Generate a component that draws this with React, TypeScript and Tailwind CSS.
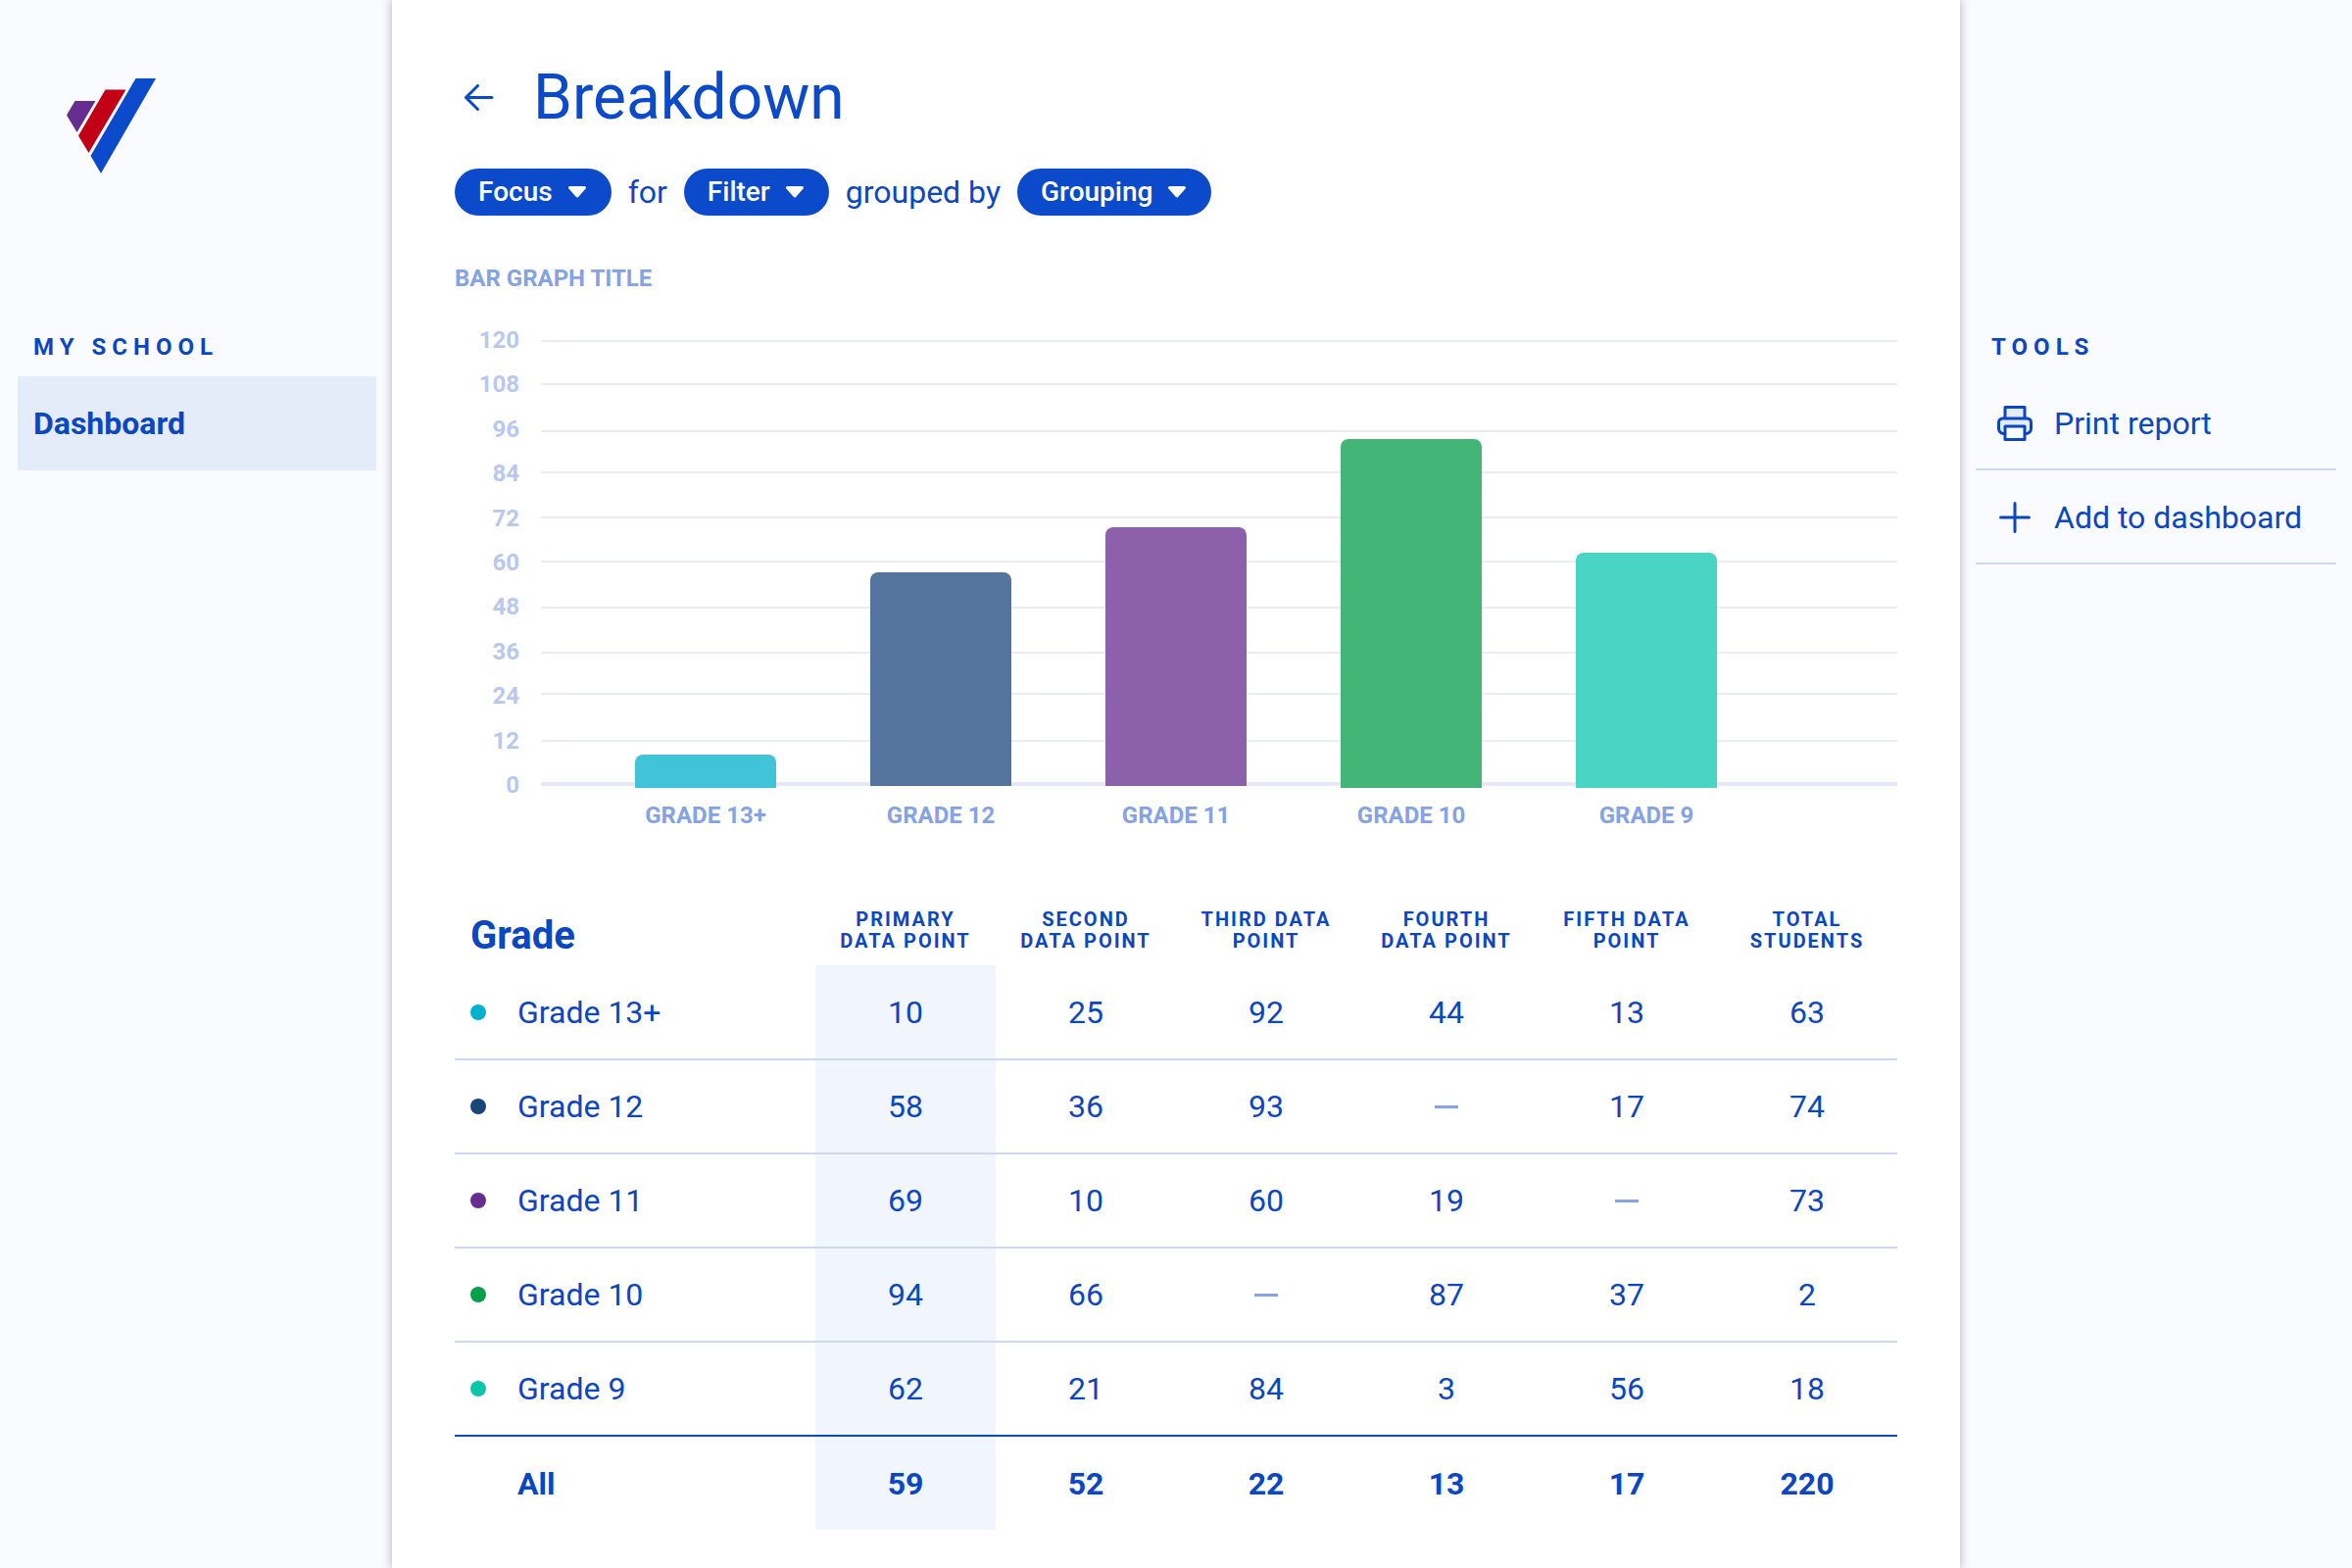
import React from "react";

const BARS = [
  { label: "GRADE 13+", height: 34, overhang: true, color: "#41c3d8" },
  { label: "GRADE 12", height: 218, overhang: false, color: "#53749d" },
  { label: "GRADE 11", height: 264, overhang: false, color: "#8d60ab" },
  { label: "GRADE 10", height: 356, overhang: true, color: "#42b577" },
  { label: "GRADE 9", height: 240, overhang: true, color: "#4ad4c4" },
];

const TICKS = [120, 108, 96, 84, 72, 60, 48, 36, 24, 12, 0];
const GRID_LINES = [1, 45, 93, 135, 181, 226, 273, 319, 361, 409];

const COLUMNS = [
  ["PRIMARY", "DATA POINT"],
  ["SECOND", "DATA POINT"],
  ["THIRD DATA", "POINT"],
  ["FOURTH", "DATA POINT"],
  ["FIFTH DATA", "POINT"],
  ["TOTAL", "STUDENTS"],
];

const ROWS = [
  { name: "Grade 13+", dot: "bg-[#00b1cd]", values: [10, 25, 92, 44, 13, 63] },
  { name: "Grade 12", dot: "bg-[#174778]", values: [58, 36, 93, null, 17, 74] },
  { name: "Grade 11", dot: "bg-[#672d91]", values: [69, 10, 60, 19, null, 73] },
  { name: "Grade 10", dot: "bg-[#069e4b]", values: [94, 66, null, 87, 37, 2] },
  { name: "Grade 9", dot: "bg-[#0dc5ad]", values: [62, 21, 84, 3, 56, 18] },
];

const TOTALS = [59, 52, 22, 13, 17, 220];

function Logo() {
  return (
    <svg width="92" height="98" viewBox="0 0 92 98" aria-label="School logo" role="img">
      <path d="M8.5 23H29.5L10.5 55L0 37.5Z" fill="#662d91" />
      <path d="M39.5 11.5H60.5L22.5 76L12 58.5Z" fill="#c10016" />
      <path d="M70.5 0H91L35 97L24.5 79Z" fill="#0b4acb" />
    </svg>
  );
}

function PrinterIcon() {
  return (
    <svg width="36" height="36" viewBox="0 0 36 36" fill="none" stroke="#0b47c1" strokeWidth="3" strokeLinejoin="round" aria-hidden="true">
      <path d="M8 13V1.5H28V13" fill="#e4ebf9" />
      <path d="M8 28.5H6.5A5 5 0 0 1 1.5 23.5V17A4 4 0 0 1 5.5 13H30.5A4 4 0 0 1 34.5 17V23.5A5 5 0 0 1 29.500 28.500H28" fill="#e4ebf9" />
      <path d="M8 21H28V34.500H8Z" fill="#f9fbff" />
    </svg>
  );
}

function PlusIcon() {
  return (
    <svg width="36" height="36" viewBox="0 0 36 36" stroke="#0b47c1" strokeWidth="3" strokeLinecap="round" aria-hidden="true">
      <path d="M18 3.500V32.500M3.500 18H32.500" />
    </svg>
  );
}

function BackIcon() {
  return (
    <svg width="32" height="28" viewBox="0 0 32 28" fill="none" stroke="#0b4acb" strokeWidth="3" strokeLinecap="round" strokeLinejoin="round" aria-hidden="true">
      <path d="M30 13.500H3.500M15.500 1.500L3.500 13.500L15.500 25.500" />
    </svg>
  );
}

function Pill({ children }: { children: string }) {
  return (
    <button type="button" className="flex h-12 items-center gap-4 rounded-full bg-[#0b4acb] pr-[26px] pl-6 text-[28px] leading-8 font-medium text-white">
      {children}
      <svg width="18" height="12" viewBox="0 0 18 12" fill="#fff" stroke="#fff" strokeWidth="3" strokeLinejoin="round" aria-hidden="true">
        <path d="M1.500 1.500H16.500L9 10Z" />
      </svg>
    </button>
  );
}

function Chart() {
  return (
    <figure className="flex pt-6">
      <div className="flex h-[500px] w-[66px] shrink-0 flex-col items-end justify-between pt-px text-2xl leading-[45px] font-bold text-[#b9c8ee]">
        {TICKS.map((t) => (
          <span key={t}>{t}</span>
        ))}
      </div>
      <div className="relative ml-[22px] flex-1 pt-[23px]">
        <svg className="absolute left-0 w-full" height="456" aria-hidden="true">
          {GRID_LINES.map((y) => (
            <line key={y} x1="0" x2="100%" y1={y} y2={y} stroke="#e9ebf8" strokeWidth="2" />
          ))}
          <line x1="0" x2="100%" y1="453" y2="453" stroke="#e6e8f7" strokeWidth="4" />
        </svg>
        <div className="relative grid grid-cols-5 pr-[136px] pl-12">
          {BARS.map((b) => (
            <div key={b.label} className="flex flex-col items-center">
              <div className="flex h-[457px] w-3/5 flex-col justify-end">
                <div className="w-full rounded-t-lg" style={{ height: b.height, backgroundColor: b.color, marginBottom: b.overhang ? 0 : 2 }} />
              </div>
              <span className="mt-3 text-2xl leading-8 font-bold text-[#85a3e4]">{b.label}</span>
            </div>
          ))}
        </div>
      </div>
    </figure>
  );
}

function DataTable() {
  return (
    <table className="mt-14 w-full table-fixed border-collapse text-[32px] leading-10">
      <thead>
        <tr className="h-[81px]">
          <th scope="col" className="w-1/4 pt-5 pl-4 text-left text-[40px] leading-[44px] font-bold">Grade</th>
          {COLUMNS.map(([a, b]) => (
            <th key={a} scope="col" className="pt-2 text-center text-xl leading-[22px] font-bold tracking-[2px]">
              {a}
              <br />
              {b}
            </th>
          ))}
        </tr>
      </thead>
      <tbody>
        {ROWS.map((r, i) => (
          <tr key={r.name} className={i === ROWS.length - 1 ? "h-24 border-b-2 border-[#0b47c1]" : "h-24 border-b-2 border-[#cbdaf1]"}>
            <th scope="row" className="pl-4 text-left font-normal">
              <span className="flex items-center gap-8">
                <span className={`size-4 rounded-full ${r.dot}`} />
                {r.name}
              </span>
            </th>
            {r.values.map((v, c) => (
              <td key={c} className={c === 0 ? "bg-[#f1f5fe] text-center" : "text-center"}>
                {v === null ? <span className="mx-auto block h-[3px] w-6 bg-[#88a3e0]" aria-label="No data" /> : v}
              </td>
            ))}
          </tr>
        ))}
      </tbody>
      <tfoot>
        <tr className="h-24 font-bold">
          <th scope="row" className="pl-16 text-left">All</th>
          {TOTALS.map((v, c) => (
            <td key={c} className={c === 0 ? "bg-[#f1f5fe] text-center" : "text-center"}>{v}</td>
          ))}
        </tr>
      </tfoot>
    </table>
  );
}

export default function App() {
  return (
    <div className="grid min-h-screen grid-cols-[1fr_4fr_1fr] bg-[#f9fbff] font-['Roboto',sans-serif] text-[#0b47c1]">
      <aside className="pr-4 pl-[18px]">
        <div className="h-[336px] pt-20 pl-[50px]">
          <Logo />
        </div>
        <h2 className="pl-4 text-2xl leading-9 font-bold tracking-[6px]">MY SCHOOL</h2>
        <nav className="mt-3">
          <a href="#dashboard" className="flex h-24 items-center bg-[#e5ecf9] pl-4 text-[32px] leading-10 font-bold">Dashboard</a>
        </nav>
      </aside>

      <main className="bg-white px-16 pt-[58px] shadow-[0_0_10px_rgba(0,0,0,0.3)]">
        <header className="flex items-center gap-10 pl-2">
          <button type="button" aria-label="Back">
            <BackIcon />
          </button>
          <h1 className="text-[64px] leading-[84px] text-[#0b4acb]">Breakdown</h1>
        </header>
        <div className="mt-[30px] flex items-center gap-[17px] text-[32px] leading-10">
          <Pill>Focus</Pill>
          <span>for</span>
          <Pill>Filter</Pill>
          <span>grouped by</span>
          <Pill>Grouping</Pill>
        </div>
        <h2 className="mt-12 text-2xl leading-8 font-bold text-[#85a3e4]">BAR GRAPH TITLE</h2>
        <Chart />
        <DataTable />
      </main>

      <aside className="px-4 pt-[336px]">
        <h2 className="pl-4 text-2xl leading-9 font-bold tracking-[6px]">TOOLS</h2>
        <div className="mt-3 text-[32px] leading-10">
          <button type="button" className="flex h-24 w-full items-center gap-[22px] border-b-2 border-[#cbdaf1] pt-0.5 pl-[22px]">
            <PrinterIcon />
            Print report
          </button>
          <button type="button" className="flex h-24 w-full items-center gap-[22px] border-b-2 border-[#cbdaf1] pt-0.5 pl-[22px]">
            <PlusIcon />
            Add to dashboard
          </button>
        </div>
      </aside>
    </div>
  );
}
